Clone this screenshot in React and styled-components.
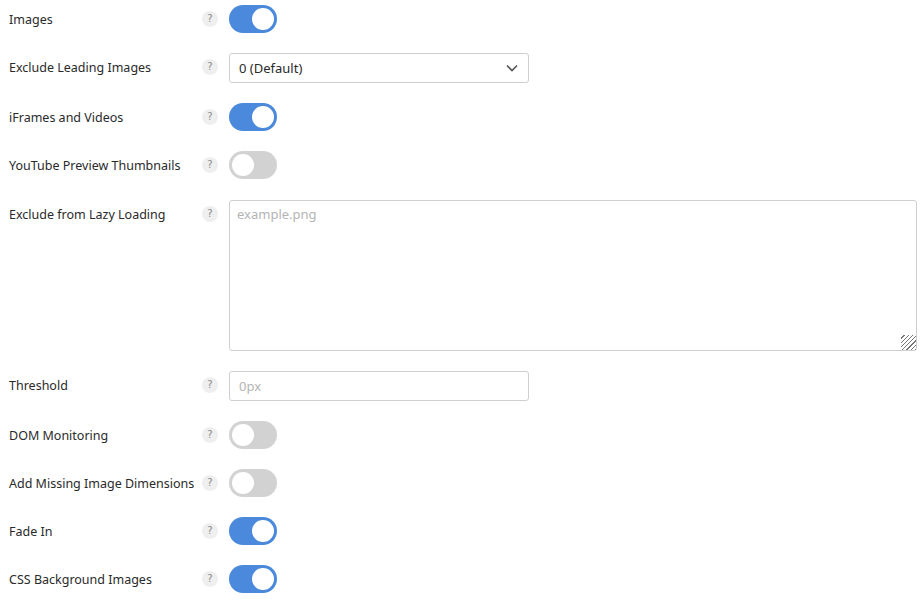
import React, { useState } from "react";
import styled, { createGlobalStyle } from "styled-components";

const GlobalStyle = createGlobalStyle`
  html, body {
    margin: 0;
    padding: 0;
    background: #fff;
  }
  body {
    font-family: "Noto Sans", "Open Sans", sans-serif;
    font-size: 12.5px;
    color: #2a2a2a;
  }
`;

const Settings = styled.div`
  padding: 0 4px 0 9px;
`;

const Row = styled.div`
  display: grid;
  grid-template-columns: 193px 22px 1fr;
  align-items: start;
  padding: ${(p) => (p.$tall ? "11px 0 10px" : "10px 0")};

  &:first-child {
    padding-top: 5px;
  }
`;

const Label = styled.div`
  line-height: 28px;
  margin: 1px 0 -1px;
  white-space: nowrap;
`;

const HelpCell = styled.div`
  height: 28px;
  display: flex;
  align-items: center;
`;

const Help = styled.span`
  width: 16px;
  height: 16px;
  border-radius: 50%;
  background: #efefef;
  color: #8a8a8a;
  font-size: 10px;
  line-height: 16px;
  text-align: center;
  font-family: "DejaVu Sans", sans-serif;
`;

const Control = styled.div`
  padding-left: 5px;
  display: flex;
  align-items: center;
  min-height: 28px;
`;

const Track = styled.button`
  position: relative;
  width: 48px;
  height: 28px;
  border: none;
  border-radius: 14px;
  padding: 0;
  cursor: pointer;
  background: ${(p) => (p.$on ? "#4a89dc" : "#d2d2d2")};

  &::after {
    content: "";
    position: absolute;
    top: 3px;
    left: ${(p) => (p.$on ? "23px" : "3px")};
    width: 22px;
    height: 22px;
    border-radius: 50%;
    background: #fff;
  }
`;

const SelectBox = styled.div`
  width: 300px;
  height: 30px;
  box-sizing: border-box;
  border: 1px solid #cfcfcf;
  border-radius: 3px;
  display: flex;
  align-items: center;
  justify-content: space-between;
  padding: 0 10px 0 9px;
  font-size: 13px;
  color: #2a2a2a;
`;

const TextInput = styled.input`
  width: 300px;
  height: 30px;
  box-sizing: border-box;
  border: 1px solid #cfcfcf;
  border-radius: 3px;
  padding: 0 9px;
  font-family: inherit;
  font-size: 13px;
  outline: none;

  &::placeholder {
    color: #b4b4b4;
  }
`;

const TextArea = styled.textarea`
  width: 688px;
  height: 151px;
  box-sizing: border-box;
  border: 1px solid #cfcfcf;
  border-radius: 3px;
  padding: 4px 7px;
  font-family: inherit;
  font-size: 13px;
  outline: none;
  resize: both;
  display: block;

  &::placeholder {
    color: #b4b4b4;
  }

  &::-webkit-resizer {
    background: repeating-linear-gradient(
      135deg,
      transparent 0 2px,
      #777 2px 3px
    );
    clip-path: polygon(100% 0, 100% 100%, 0 100%);
  }
`;

const Toggle = ({ initial }) => {
  const [on, setOn] = useState(initial);
  return <Track $on={on} onClick={() => setOn(!on)} aria-pressed={on} />;
};

const Chevron = () => (
  <svg width="12" height="8" viewBox="0 0 12 8">
    <path d="M1 1.5 L6 6.5 L11 1.5" fill="none" stroke="#555" strokeWidth="1.6" />
  </svg>
);

const Field = ({ label, tall, children }) => (
  <Row $tall={tall}>
    <Label>{label}</Label>
    <HelpCell>
      <Help>?</Help>
    </HelpCell>
    <Control>{children}</Control>
  </Row>
);

export default function App() {
  return (
    <>
      <GlobalStyle />
      <Settings>
        <Field label="Images">
          <Toggle initial={true} />
        </Field>
        <Field label="Exclude Leading Images">
          <SelectBox>
            <span>0 (Default)</span>
            <Chevron />
          </SelectBox>
        </Field>
        <Field label="iFrames and Videos">
          <Toggle initial={true} />
        </Field>
        <Field label="YouTube Preview Thumbnails">
          <Toggle initial={false} />
        </Field>
        <Field label="Exclude from Lazy Loading" tall>
          <TextArea placeholder="example.png" />
        </Field>
        <Field label="Threshold">
          <TextInput placeholder="0px" />
        </Field>
        <Field label="DOM Monitoring">
          <Toggle initial={false} />
        </Field>
        <Field label="Add Missing Image Dimensions">
          <Toggle initial={false} />
        </Field>
        <Field label="Fade In">
          <Toggle initial={true} />
        </Field>
        <Field label="CSS Background Images">
          <Toggle initial={true} />
        </Field>
      </Settings>
    </>
  );
}
